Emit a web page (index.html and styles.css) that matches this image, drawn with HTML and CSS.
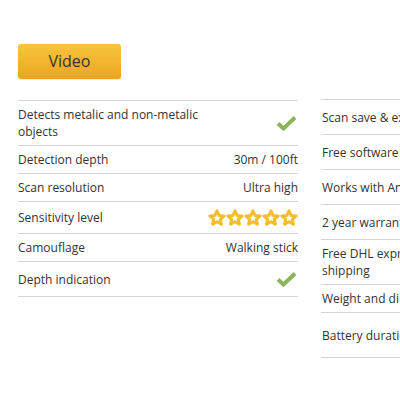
FILE: index.html
```
<!DOCTYPE html>
<html>
<head>
<meta charset="utf-8">
<link rel="stylesheet" href="styles.css">
</head>
<body>
<div class="page">
  <div class="btn">Video</div>
  <div class="tables">
    <div class="specs left">
      <div class="row tall"><span class="label">Detects metalic and non-metalic objects</span><span class="val"><svg class="check" width="21" height="16" viewBox="0 0 21 16"><path d="M2 8.5 L7.5 13.5 L19 2.5" fill="none" stroke="#8cb559" stroke-width="4"/></svg></span></div>
      <div class="row"><span class="label">Detection depth</span><span class="val">30m / 100ft</span></div>
      <div class="row"><span class="label">Scan resolution</span><span class="val">Ultra high</span></div>
      <div class="row stars-row"><span class="label">Sensitivity level</span><span class="val stars">
        <svg width="18" height="18" viewBox="0 0 24 24"><path d="M12 2.5 L14.8 8.6 L21.5 9.3 L16.5 13.8 L17.9 20.4 L12 17 L6.1 20.4 L7.5 13.8 L2.5 9.3 L9.2 8.6 Z" fill="#fff8e0" stroke="#f4bd2c" stroke-width="4" stroke-linejoin="round"/></svg>
        <svg width="18" height="18" viewBox="0 0 24 24"><path d="M12 2.5 L14.8 8.6 L21.5 9.3 L16.5 13.8 L17.9 20.4 L12 17 L6.1 20.4 L7.5 13.8 L2.5 9.3 L9.2 8.6 Z" fill="#fff8e0" stroke="#f4bd2c" stroke-width="4" stroke-linejoin="round"/></svg>
        <svg width="18" height="18" viewBox="0 0 24 24"><path d="M12 2.5 L14.8 8.6 L21.5 9.3 L16.5 13.8 L17.9 20.4 L12 17 L6.1 20.4 L7.5 13.8 L2.5 9.3 L9.2 8.6 Z" fill="#fff8e0" stroke="#f4bd2c" stroke-width="4" stroke-linejoin="round"/></svg>
        <svg width="18" height="18" viewBox="0 0 24 24"><path d="M12 2.5 L14.8 8.6 L21.5 9.3 L16.5 13.8 L17.9 20.4 L12 17 L6.1 20.4 L7.5 13.8 L2.5 9.3 L9.2 8.6 Z" fill="#fff8e0" stroke="#f4bd2c" stroke-width="4" stroke-linejoin="round"/></svg>
        <svg width="18" height="18" viewBox="0 0 24 24"><path d="M12 2.5 L14.8 8.6 L21.5 9.3 L16.5 13.8 L17.9 20.4 L12 17 L6.1 20.4 L7.5 13.8 L2.5 9.3 L9.2 8.6 Z" fill="#fff8e0" stroke="#f4bd2c" stroke-width="4" stroke-linejoin="round"/></svg>
      </span></div>
      <div class="row"><span class="label">Camouflage</span><span class="val">Walking stick</span></div>
      <div class="row check-row"><span class="label">Depth indication</span><span class="val"><svg class="check" width="21" height="16" viewBox="0 0 21 16"><path d="M2 8.5 L7.5 13.5 L19 2.5" fill="none" stroke="#8cb559" stroke-width="4"/></svg></span></div>
    </div>
    <div class="specs right">
      <div class="row check-row"><span class="label">Scan save &amp; export</span><span class="val"></span></div>
      <div class="row check-row"><span class="label">Free software</span><span class="val"></span></div>
      <div class="row check-row"><span class="label">Works with Android</span><span class="val"></span></div>
      <div class="row check-row"><span class="label">2 year warranty</span><span class="val"></span></div>
      <div class="row"><span class="label">Free DHL express shipping</span><span class="val"></span></div>
      <div class="row"><span class="label">Weight and dimensions</span><span class="val"></span></div>
      <div class="row battery"><span class="label">Battery duration</span><span class="val"></span></div>
    </div>
  </div>
</div>
</body>
</html>
```
FILE: styles.css
```
html, body {
  margin: 0;
  padding: 0;
  overflow: hidden;
  background: #fff;
}
body {
  font-family: "Open Sans", "Noto Sans", sans-serif;
  font-size: 12px;
  color: #333;
}
.page {
  padding: 44px 0 0 18px;
  width: 700px;
}
.btn {
  width: 103px;
  height: 35px;
  box-sizing: border-box;
  border-radius: 3px;
  background: linear-gradient(#f8c53e, #eba520);
  color: #333;
  font-size: 16px;
  line-height: 35px;
  text-align: center;
  box-shadow: 0 1px 1px rgba(0,0,0,0.08);
}
.tables {
  display: flex;
  gap: 23px;
  margin-top: 20px;
  align-items: flex-start;
}
.specs {
  width: 280px;
  border-bottom: 1px solid #d4d4d4;
}
.left { margin-top: 1px; }
.row {
  display: flex;
  justify-content: space-between;
  align-items: center;
  border-top: 1px solid #d4d4d4;
  padding: 5px 0;
  line-height: 17px;
  min-height: 17px;
}
.right .row { padding-left: 1px; }
.left .label { max-width: 195px; }
.right .label { max-width: 142px; }
.val {
  text-align: right;
  white-space: nowrap;
  display: flex;
  align-items: center;
}
.check { display: block; margin-right: 1px; }
.check-row { min-height: 24px; }
.stars-row { min-height: 21px; }
.stars { gap: 0; }
.stars svg { display: block; }
.battery { min-height: 34px; }
```
